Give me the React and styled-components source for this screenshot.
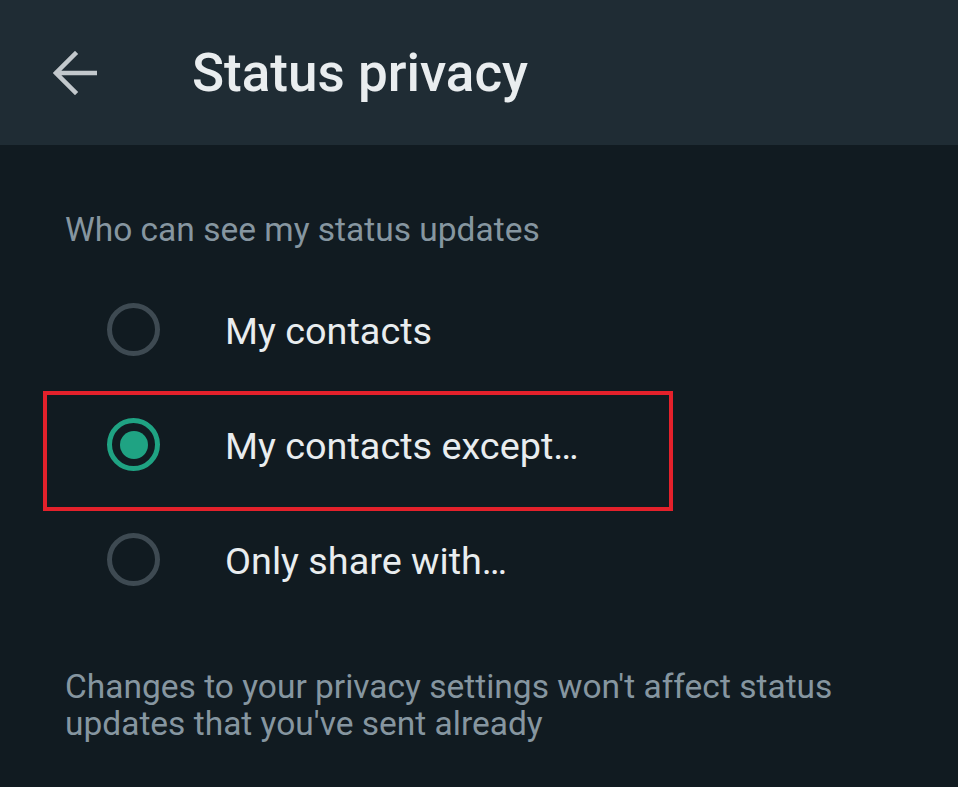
import React from "react";
import styled, { createGlobalStyle } from "styled-components";

const Global = createGlobalStyle`
  html, body {
    margin: 0;
    padding: 0;
    background: #111b21;
  }
  body {
    font-family: Roboto, "Noto Sans", "Liberation Sans", sans-serif;
    -webkit-font-smoothing: antialiased;
  }
`;

const Screen = styled.div`
  width: 958px;
  height: 787px;
  background: #111b21;
  display: flex;
  flex-direction: column;
  overflow: hidden;
`;

const Header = styled.header`
  height: 145px;
  flex: 0 0 145px;
  background: #1f2c34;
  display: flex;
  align-items: center;
  padding-left: 53px;
  box-sizing: border-box;
`;

const BackButton = styled.button`
  width: 44px;
  height: 44px;
  padding: 0;
  margin: 0 95px 0 0;
  border: none;
  background: transparent;
  display: flex;
  align-items: center;
  justify-content: center;
  color: #c2c8cc;
  cursor: pointer;
`;

const Title = styled.h1`
  margin: 0;
  padding-top: 2px;
  font-size: 53px;
  font-weight: 500;
  color: #e9edef;
  letter-spacing: 0;
  line-height: 1;
`;

const Content = styled.main`
  display: flex;
  flex-direction: column;
  padding-top: 65px;
`;

const SectionLabel = styled.div`
  padding-left: 65px;
  font-size: 33.5px;
  line-height: 40px;
  color: #8696a0;
`;

const Options = styled.div`
  display: flex;
  flex-direction: column;
  margin-top: 22px;
`;

const Row = styled.label`
  position: relative;
  height: 115px;
  display: flex;
  align-items: center;
  padding-left: 107px;
  cursor: pointer;
`;

const Highlight = styled.span`
  position: absolute;
  left: 43px;
  top: 4px;
  width: 630px;
  height: 120px;
  box-sizing: border-box;
  border: 4.5px solid #e4212b;
  pointer-events: none;
`;

const Radio = styled.span`
  width: 53px;
  height: 53px;
  box-sizing: border-box;
  border-radius: 50%;
  border: 5px solid ${(p) => (p.$checked ? "#1fa383" : "#3e4a52")};
  display: flex;
  align-items: center;
  justify-content: center;
  margin-right: 65px;
  flex: 0 0 auto;

  &::after {
    content: "";
    width: 28px;
    height: 28px;
    border-radius: 50%;
    background: #1fa383;
    display: ${(p) => (p.$checked ? "block" : "none")};
  }
`;

const OptionText = styled.span`
  font-size: 37.8px;
  color: #e9edef;
  line-height: 1;
  padding-top: 4px;
`;

const Note = styled.p`
  margin: 51px 0 0;
  padding-left: 65px;
  padding-right: 100px;
  font-size: 33.5px;
  line-height: 37px;
  color: #8696a0;
`;

const options = [
  { id: "contacts", label: "My contacts" },
  { id: "except", label: "My contacts except…" },
  { id: "only", label: "Only share with…" },
];

export default function App() {
  const selected = "except";
  return (
    <>
      <Global />
      <Screen>
        <Header>
          <BackButton aria-label="Back">
            <svg width="44" height="44" viewBox="0 0 44 44" fill="none">
              <path
                d="M43 22H4M22 3L3 22l19 19"
                stroke="currentColor"
                strokeWidth="4.5"
                strokeLinecap="square"
                strokeLinejoin="miter"
              />
            </svg>
          </BackButton>
          <Title>Status privacy</Title>
        </Header>
        <Content>
          <SectionLabel>Who can see my status updates</SectionLabel>
          <Options>
            {options.map((o) => (
              <Row key={o.id}>
                <Radio $checked={o.id === selected} />
                <OptionText>{o.label}</OptionText>
                {o.id === selected && <Highlight />}
              </Row>
            ))}
          </Options>
          <Note>
            Changes to your privacy settings won't affect status updates that
            you've sent already
          </Note>
        </Content>
      </Screen>
    </>
  );
}
